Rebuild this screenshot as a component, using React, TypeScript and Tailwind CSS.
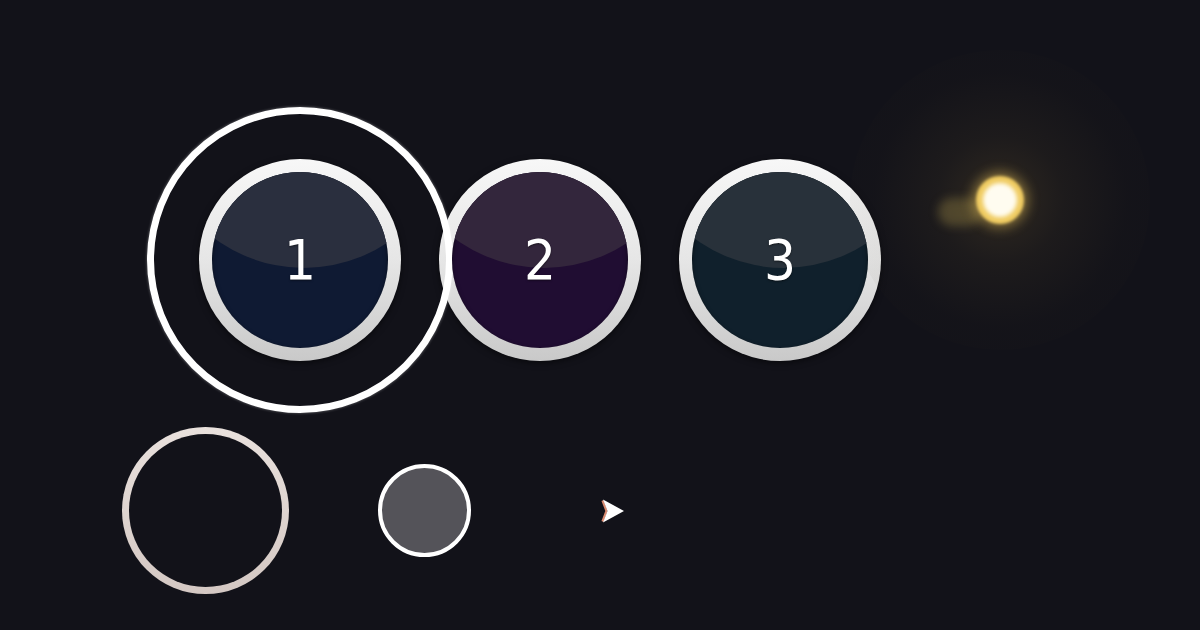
import React from "react";

const Orb = ({ n, hiClass, baseClass }: { n: string; hiClass: string; baseClass: string }) => (
  <div className="w-[202px] h-[202px] rounded-full p-[13px] bg-gradient-to-b from-[#f7f7f7] via-[#e6e6e6] to-[#c9c9c9] shadow-[0_2px_6px_rgba(0,0,0,0.5)] shrink-0">
    <div className={`relative w-full h-full rounded-full overflow-hidden ${baseClass} shadow-[inset_0_2px_4px_rgba(0,0,0,0.5)]`}>
      <div className={`absolute left-[-58px] top-[-222px] w-[300px] h-[318px] rounded-full ${hiClass}`} />
      <div className="absolute inset-0 flex items-center justify-center">
        <span
          className="text-white text-[56px] leading-none [text-shadow:0_1px_2px_rgba(0,0,0,0.5)]"
          style={{ fontFamily: '"Liberation Sans Narrow", "DejaVu Sans Condensed", sans-serif' }}
        >
          {n}
        </span>
      </div>
    </div>
  </div>
);

export default function App() {
  return (
    <div className="relative w-[1200px] h-[630px] overflow-hidden bg-[#121219]">
      {/* glow */}
      <div className="absolute left-[850px] top-[50px] w-[300px] h-[300px] rounded-full bg-[radial-gradient(circle,rgba(200,160,70,0.16)_0%,rgba(160,130,60,0.08)_30%,rgba(60,50,30,0.05)_60%,rgba(18,18,25,0)_100%)]" />
      <div className="absolute left-[938px] top-[198px] w-[44px] h-[28px] rounded-full bg-[rgba(220,190,90,0.25)] blur-[5px]" />
      <div className="absolute left-[976px] top-[176px] w-[48px] h-[48px] rounded-full bg-[#f0cc62] blur-[1.5px] shadow-[0_0_12px_4px_rgba(240,200,90,0.45)]" />
      <div className="absolute left-[983px] top-[183px] w-[34px] h-[34px] rounded-full bg-[#fffcf0] blur-[2px]" />

      <div className="flex flex-col pt-[159px]">
        <div className="flex pl-[199px] gap-[38px] h-[202px]">
          <div className="relative">
            <div className="absolute left-[-52px] top-[-52px] w-[306px] h-[306px] rounded-full border-[7px] border-white shadow-[0_0_3px_rgba(255,255,255,0.4)]" />
            <Orb n="1" baseClass="bg-[#0f1a33]" hiClass="bg-[#2a2f3e]" />
          </div>
          <Orb n="2" baseClass="bg-[#200d32]" hiClass="bg-[#33263c]" />
          <Orb n="3" baseClass="bg-[#10202c]" hiClass="bg-[#28313a]" />
        </div>

        <div className="flex items-center pl-[122px] mt-[66px] h-[167px]">
          <div className="w-[167px] h-[167px] rounded-full p-[7px] bg-gradient-to-b from-[#e9e1dd] to-[#d4c8c3] shrink-0">
            <div className="w-full h-full rounded-full bg-[#121219]" />
          </div>
          <div className="ml-[89px] w-[93px] h-[93px] rounded-full border-[4px] border-white bg-[#545359] shrink-0" />
          <svg className="ml-[129px]" width="26" height="26" viewBox="0 0 26 26">
            <path d="M2.5 2.5 L6.5 13 L2.5 23.5" fill="none" stroke="#d88a70" strokeWidth="2.2" />
            <path d="M3 1.5 L24 13 L3 24.5 L7.5 13 Z" fill="#ffffff" />
          </svg>
        </div>
      </div>
    </div>
  );
}
